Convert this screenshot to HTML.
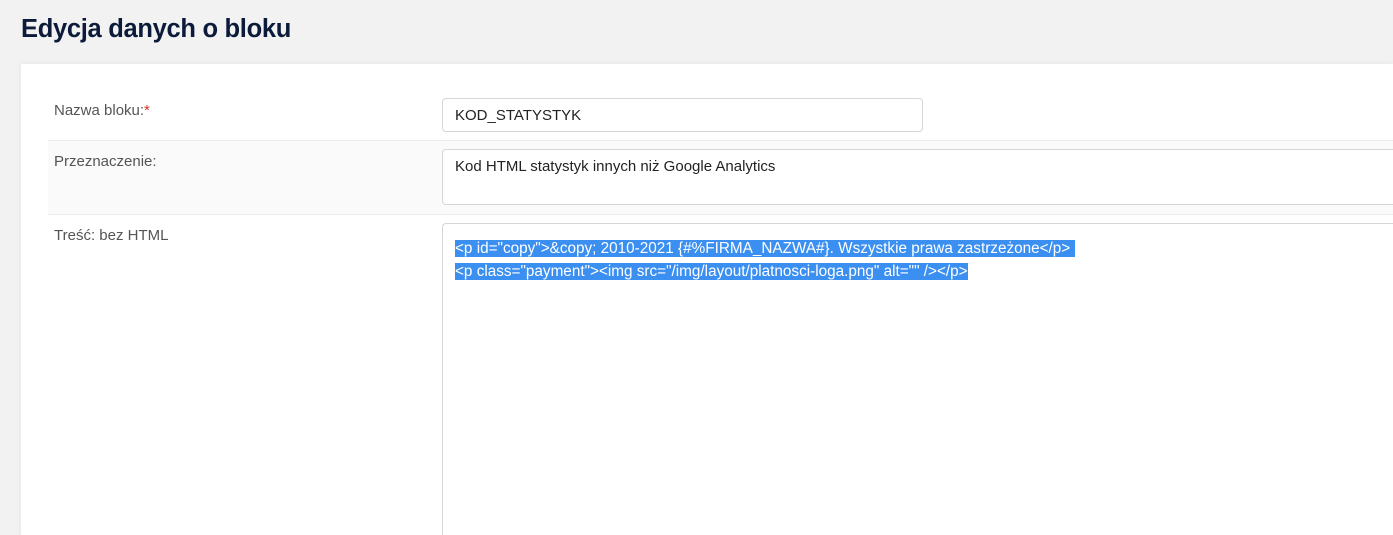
<!DOCTYPE html>
<html><head><meta charset="utf-8"><style>
*{box-sizing:border-box;margin:0;padding:0}
html,body{width:1393px;height:535px;overflow:hidden}
body{background:#f2f2f2;font-family:"Liberation Sans",sans-serif;position:relative}
h1{position:absolute;left:21px;top:15px;font-size:25.5px;font-weight:bold;color:#0d1b3a;letter-spacing:-0.3px}
.card{position:absolute;left:21px;top:64px;width:1372px;height:471px;background:#fff;box-shadow:0 0 6px rgba(0,0,0,.06)}
.row{position:absolute;width:1345px;border-bottom:1px solid #ececec}
.lab{position:absolute;font-size:15px;color:#555}
.inp{position:absolute;border:1px solid #d6d6d6;border-radius:4px;background:#fff;font-size:15px;color:#222;padding-left:12px}
.sel{background:#3b8ff0;color:#fff;font-size:15.3px;line-height:23px;display:inline}
</style></head><body>
<h1>Edycja danych o bloku</h1>
<div class="card"></div>
<div class="row" style="left:48px;top:88px;height:53px;background:#fff"></div>
<div class="row" style="left:48px;top:141px;height:74px;background:#fafafa"></div>
<div class="lab" style="left:54px;top:102px">Nazwa bloku:<span style="color:#e0322a">*</span></div>
<div class="lab" style="left:54px;top:153px">Przeznaczenie:</div>
<div class="lab" style="left:54px;top:227px">Treść: bez HTML</div>
<div class="inp" style="left:442px;top:98px;width:481px;height:34px;line-height:33px">KOD_STATYSTYK</div>
<div class="inp" style="left:442px;top:149px;width:951px;height:56px;padding-top:8px;border-right:none;border-radius:4px 0 0 4px">Kod HTML statystyk innych niż Google Analytics</div>
<div class="inp" style="left:442px;top:223px;width:951px;height:312px;padding-top:13px;padding-left:12px;border-right:none;border-bottom:none;border-radius:4px 0 0 0">
<div><span class="sel">&lt;p id="copy"&gt;&amp;copy; 2010-2021 {#%FIRMA_NAZWA#}. Wszystkie prawa zastrzeżone&lt;/p&gt;&nbsp;</span></div>
<div><span class="sel">&lt;p class="payment"&gt;&lt;img src="/img/layout/platnosci-loga.png" alt="" /&gt;&lt;/p&gt;</span></div>
</div>
</body></html>
